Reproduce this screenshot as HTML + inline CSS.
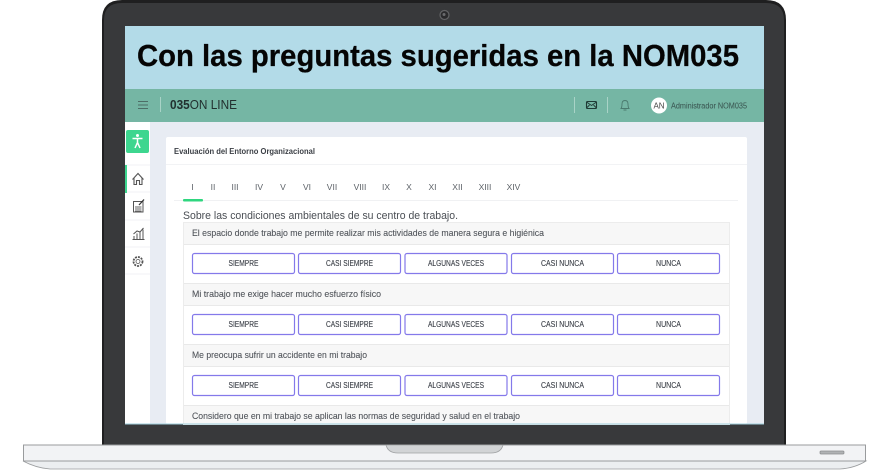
<!DOCTYPE html>
<html lang="es"><head><meta charset="utf-8"><title>NOM035</title>
<style>
html,body{margin:0;padding:0;background:#fff;width:890px;height:470px;overflow:hidden}
svg{display:block;filter:blur(.3px)}
text{font-family:"Liberation Sans",sans-serif}
.b{fill:#fff;stroke:#8479ea;stroke-width:1.2}
.t{font-size:8px;fill:#3c4048;text-anchor:middle;stroke:#3c4048;stroke-width:.12}
.q{font-size:9.2px;fill:#4f5359;stroke:#4f5359;stroke-width:.08}
.h{fill:#f7f7f7}
.l{stroke:#e9e9e9;stroke-width:1}
.n{font-size:8.5px;fill:#5d6268;text-anchor:middle}
</style></head><body>
<svg width="890" height="470" viewBox="0 0 890 470" xmlns="http://www.w3.org/2000/svg">
<rect width="890" height="470" fill="#fff"/>
<!-- laptop lid -->
<path d="M102 445V20Q102 0 122 0H766Q786 0 786 20V445Z" fill="#1f1f20"/>
<path d="M104 445V20Q104 3 122 3H766Q784 3 784 20V445Z" fill="#38393b"/>
<circle cx="444.500" cy="15" r="4.500" fill="#2a2a2c" stroke="#626365" stroke-width="1.200"/>
<circle cx="444" cy="14.500" r="1.500" fill="#6a6b6d"/>
<!-- base -->
<path d="M23 461Q36 468 50 469H840Q855 468 866 461Z" fill="#eceef0" stroke="#9a9c9e" stroke-width="0.800"/>
<rect x="23.500" y="445" width="842" height="16" fill="#f2f3f5" stroke="#999b9d" stroke-width="1"/>
<path d="M386 445H503Q501 453 491 453H398Q388 453 386 445Z" fill="#d2d4d6" stroke="#a0a2a4" stroke-width="0.800"/>
<rect x="820" y="451" width="24" height="3" rx="1" fill="#b0b2b4" stroke="#8a8c8e" stroke-width="0.700"/>
<!-- screen -->
<rect x="125" y="26" width="639" height="398" fill="#e8ecf3"/>
<rect x="125" y="26" width="639" height="63" fill="#b3dbe8"/>
<text x="137" y="66" font-size="31" font-weight="700" fill="#050505" stroke="#050505" stroke-width=".25" textLength="602" lengthAdjust="spacingAndGlyphs">Con las preguntas sugeridas en la NOM035</text>
<rect x="125" y="89" width="639" height="33" fill="#75b6a4"/>
<path d="M138 101.500H148M138 105H148M138 108.500H148" stroke="#4d6d66" stroke-width="1"/>
<rect x="160" y="97" width="1" height="15" fill="#a9d3c7"/>
<text x="170" y="109" font-size="12.500" fill="#22302f" textLength="67" lengthAdjust="spacingAndGlyphs"><tspan font-weight="700">035</tspan>ON LINE</text>
<rect x="574" y="97" width="1" height="16" fill="#a9d3c7"/>
<rect x="607" y="97" width="1" height="16" fill="#a9d3c7"/>
<rect x="586.500" y="101.500" width="10" height="7" rx="1" fill="none" stroke="#1f3a35" stroke-width="1.100"/>
<path d="M586.500 102L591.500 105.500L596.500 102M586.500 108L589.500 105M596.500 108L593.500 105" fill="none" stroke="#1f3a35" stroke-width="0.900"/>
<path d="M621 108.500Q622 107 622 104Q622 100.500 625 100.500Q628 100.500 628 104Q628 107 629 108.500ZM623.500 110H626.500" fill="none" stroke="#4a7a6e" stroke-width="0.900"/>
<circle cx="659" cy="105.500" r="8" fill="#fff"/>
<text x="659" y="108.500" font-size="8" fill="#444" text-anchor="middle">AN</text>
<text x="671" y="108.500" font-size="8" fill="#3d5a55" stroke="#3d5a55" stroke-width=".08" textLength="76" lengthAdjust="spacingAndGlyphs">Administrador NOM035</text>
<!-- sidebar -->
<rect x="125" y="122" width="25" height="302" fill="#fff"/>
<rect x="126" y="130" width="23" height="23" rx="2" fill="#3dd68f"/>
<circle cx="137.500" cy="135.500" r="1.500" fill="#fff"/>
<path d="M132.500 138.500H142.500M137.500 138.500V142.500M137.500 142.500L135 148M137.500 142.500L140 148" stroke="#fff" stroke-width="1.500" fill="none"/>
<path d="M125 165H150M125 192H150M125 220H150M125 247H150M125 274H150" stroke="#f0f1f4" stroke-width="1"/>
<rect x="125" y="165" width="2" height="28" fill="#3dd68f"/>
<path d="M132.500 179.500L138 173.500L143.500 179.500M134 178V184.500H136.500V180.500H139.500V184.500H142V178" fill="none" stroke="#555" stroke-width="1.100"/>
<rect x="133.500" y="201.500" width="9.500" height="10.500" fill="none" stroke="#555" stroke-width="1"/>
<path d="M135 207H141.500M135 209H141.500M135 211H141.500" stroke="#666" stroke-width="0.900"/>
<path d="M139 205L144 199.500" stroke="#333" stroke-width="1.300"/>
<path d="M132.500 239.500H144.500M134 239V236M137 239V233.500M140 239V232M143 239V229.500M133.500 234L137 231L140 232L143.500 228" fill="none" stroke="#555" stroke-width="1"/>
<circle cx="138" cy="261.500" r="4.500" fill="none" stroke="#555" stroke-width="1.800" stroke-dasharray="2 1"/>
<circle cx="138" cy="261.500" r="2" fill="none" stroke="#555" stroke-width="0.800"/>
<!-- card -->
<rect x="166" y="137" width="581" height="287" rx="2" fill="#fff"/>
<text x="174" y="154" font-size="8.500" font-weight="700" fill="#3b3f45" textLength="141" lengthAdjust="spacingAndGlyphs">Evaluación del Entorno Organizacional</text>
<path d="M166 164.500H747" stroke="#f2f3f5"/>
<path d="M174 200.500H738" stroke="#f0f1f3"/>
<rect x="183" y="199" width="20" height="2.500" rx="1" fill="#2fd67f"/>
<text class="n" x="192.500" y="190" fill="#333">I</text>
<text class="n" x="213" y="190">II</text>
<text class="n" x="235" y="190">III</text>
<text class="n" x="259" y="190">IV</text>
<text class="n" x="283" y="190">V</text>
<text class="n" x="307" y="190">VI</text>
<text class="n" x="332" y="190">VII</text>
<text class="n" x="360" y="190">VIII</text>
<text class="n" x="386" y="190">IX</text>
<text class="n" x="409" y="190">X</text>
<text class="n" x="432.500" y="190">XI</text>
<text class="n" x="457.500" y="190">XII</text>
<text class="n" x="485" y="190">XIII</text>
<text class="n" x="513.500" y="190">XIV</text>
<text x="183" y="219" font-size="11" fill="#4a4e54" textLength="275" lengthAdjust="spacingAndGlyphs">Sobre las condiciones ambientales de su centro de trabajo.</text>
<!-- question block -->
<rect x="183.500" y="222.500" width="546" height="202" fill="#fff" stroke="#ececec"/>
<rect x="184" y="223" width="545" height="21" class="h"/>
<path class="l" d="M184 244.500H729M184 283.500H729M184 305.500H729M184 344.500H729M184 366.500H729M184 405.500H729"/>
<rect x="184" y="284" width="545" height="21" class="h"/>
<rect x="184" y="345" width="545" height="21" class="h"/>
<rect x="184" y="406" width="545" height="18" class="h"/>
<text class="q" x="192" y="236" textLength="352" lengthAdjust="spacingAndGlyphs">El espacio donde trabajo me permite realizar mis actividades de manera segura e higiénica</text>
<text class="q" x="192" y="297" textLength="189" lengthAdjust="spacingAndGlyphs">Mi trabajo me exige hacer mucho esfuerzo físico</text>
<text class="q" x="192" y="358" textLength="175" lengthAdjust="spacingAndGlyphs">Me preocupa sufrir un accidente en mi trabajo</text>
<text class="q" x="192" y="419" textLength="328" lengthAdjust="spacingAndGlyphs">Considero que en mi trabajo se aplican las normas de seguridad y salud en el trabajo</text>
<!-- row 1 -->
<rect class="b" x="192.500" y="253.500" width="102" height="20" rx="2"/><text class="t" x="243.500" y="266" textLength="30" lengthAdjust="spacingAndGlyphs">SIEMPRE</text>
<rect class="b" x="298.500" y="253.500" width="102" height="20" rx="2"/><text class="t" x="349.500" y="266" textLength="47" lengthAdjust="spacingAndGlyphs">CASI SIEMPRE</text>
<rect class="b" x="405" y="253.500" width="102" height="20" rx="2"/><text class="t" x="456" y="266" textLength="56" lengthAdjust="spacingAndGlyphs">ALGUNAS VECES</text>
<rect class="b" x="511.500" y="253.500" width="102" height="20" rx="2"/><text class="t" x="562.500" y="266" textLength="43" lengthAdjust="spacingAndGlyphs">CASI NUNCA</text>
<rect class="b" x="617.500" y="253.500" width="102" height="20" rx="2"/><text class="t" x="668.500" y="266" textLength="25" lengthAdjust="spacingAndGlyphs">NUNCA</text>
<!-- row 2 -->
<rect class="b" x="192.500" y="314.500" width="102" height="20" rx="2"/><text class="t" x="243.500" y="327" textLength="30" lengthAdjust="spacingAndGlyphs">SIEMPRE</text>
<rect class="b" x="298.500" y="314.500" width="102" height="20" rx="2"/><text class="t" x="349.500" y="327" textLength="47" lengthAdjust="spacingAndGlyphs">CASI SIEMPRE</text>
<rect class="b" x="405" y="314.500" width="102" height="20" rx="2"/><text class="t" x="456" y="327" textLength="56" lengthAdjust="spacingAndGlyphs">ALGUNAS VECES</text>
<rect class="b" x="511.500" y="314.500" width="102" height="20" rx="2"/><text class="t" x="562.500" y="327" textLength="43" lengthAdjust="spacingAndGlyphs">CASI NUNCA</text>
<rect class="b" x="617.500" y="314.500" width="102" height="20" rx="2"/><text class="t" x="668.500" y="327" textLength="25" lengthAdjust="spacingAndGlyphs">NUNCA</text>
<!-- row 3 -->
<rect class="b" x="192.500" y="375.500" width="102" height="20" rx="2"/><text class="t" x="243.500" y="388" textLength="30" lengthAdjust="spacingAndGlyphs">SIEMPRE</text>
<rect class="b" x="298.500" y="375.500" width="102" height="20" rx="2"/><text class="t" x="349.500" y="388" textLength="47" lengthAdjust="spacingAndGlyphs">CASI SIEMPRE</text>
<rect class="b" x="405" y="375.500" width="102" height="20" rx="2"/><text class="t" x="456" y="388" textLength="56" lengthAdjust="spacingAndGlyphs">ALGUNAS VECES</text>
<rect class="b" x="511.500" y="375.500" width="102" height="20" rx="2"/><text class="t" x="562.500" y="388" textLength="43" lengthAdjust="spacingAndGlyphs">CASI NUNCA</text>
<rect class="b" x="617.500" y="375.500" width="102" height="20" rx="2"/><text class="t" x="668.500" y="388" textLength="25" lengthAdjust="spacingAndGlyphs">NUNCA</text>
<rect x="125" y="423.500" width="639" height="1" fill="#9fcfdc"/>
</svg>
</body></html>
